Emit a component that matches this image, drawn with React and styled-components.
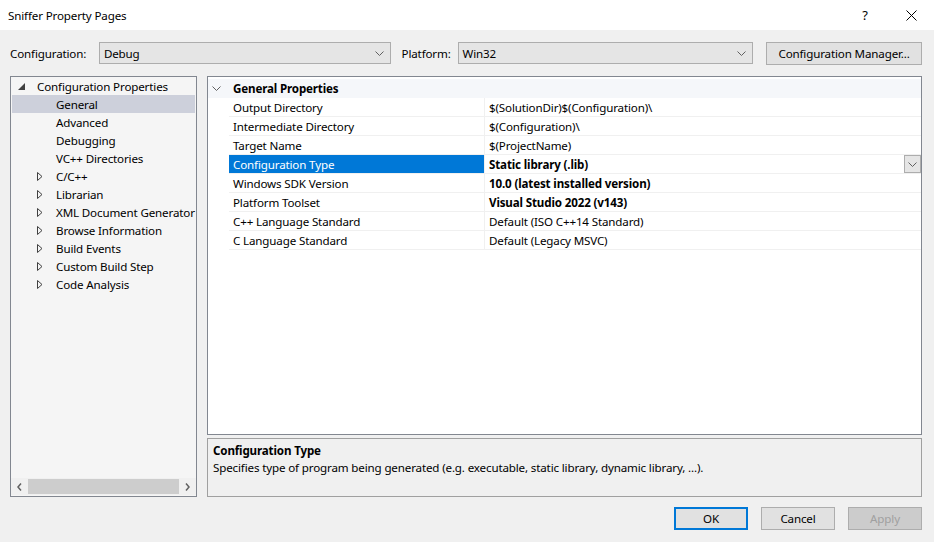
import React from 'react';
import styled, {createGlobalStyle} from 'styled-components';

const GlobalStyle = createGlobalStyle`
    body {
        margin: 0;
        font-family: "Noto Sans", "Open Sans", sans-serif;
        font-size: 11.6px;
        letter-spacing: -0.15px;
        color: #000;
    }
`;

const Window = styled.div`
    width: 934px;
    height: 542px;
    background: #f0f0f0;
    display: flex;
    flex-direction: column;
    overflow: hidden;
`;

const TitleBar = styled.div`
    height: 30px;
    background: #fff;
    display: flex;
    align-items: center;
    padding-left: 8px;
    flex-shrink: 0;
`;

const Title = styled.div`
    flex: 1;
`;

const TitleButton = styled.div`
    width: 46px;
    height: 30px;
    display: flex;
    align-items: center;
    justify-content: center;
    font-size: 13px;
`;

const Body = styled.div`
    flex: 1;
    display: flex;
    flex-direction: column;
    padding: 11px 12px 0 10px;
`;

const ConfigRow = styled.div`
    display: flex;
    align-items: center;
    height: 24px;
`;

const Label = styled.span`
    width: ${props => props.width}px;
`;

const Combo = styled.div`
    width: ${props => props.width}px;
    height: 22px;
    box-sizing: border-box;
    border: 1px solid #adadad;
    background: #e5e5e5;
    display: flex;
    align-items: center;
    padding: 0 6px 0 4px;
    margin-right: ${props => props.gap}px;
`;

const ComboText = styled.span`
    flex: 1;
`;

const Button = styled.div`
    width: ${props => props.width}px;
    height: 23px;
    box-sizing: border-box;
    border: ${props => props.primary ? '2px solid #0078d7' : '1px solid #adadad'};
    background: ${props => props.disabled ? '#cccccc' : '#e1e1e1'};
    color: ${props => props.disabled ? '#a0a0a0' : '#000'};
    display: flex;
    align-items: center;
    justify-content: center;
    white-space: nowrap;
`;

const Main = styled.div`
    display: flex;
    gap: 10px;
    margin-top: 11px;
    height: 421px;
`;

const Tree = styled.div`
    width: 187px;
    box-sizing: border-box;
    border: 1px solid #828790;
    background: #f5f5f5;
    display: flex;
    flex-direction: column;
    overflow: hidden;
`;

const TreeList = styled.div`
    flex: 1;
`;

const TreeRow = styled.div`
    height: 18px;
    display: flex;
    align-items: center;
    margin: 0 1px;
    padding-left: ${props => props.indent}px;
    background: ${props => props.selected ? '#cdd0db' : 'transparent'};
    white-space: nowrap;
`;

const Expander = styled.span`
    width: 19px;
    flex-shrink: 0;
    display: flex;
    align-items: center;
`;

const HScroll = styled.div`
    height: 17px;
    margin: 0 0 1px 0;
    display: flex;
    align-items: center;
    background: #f0f0f0;
`;

const ScrollArrow = styled.div`
    width: 17px;
    display: flex;
    justify-content: center;
    align-items: center;
`;

const ScrollThumb = styled.div`
    flex: 1;
    height: 15px;
    background: #cdcdcd;
`;

const RightColumn = styled.div`
    flex: 1;
    display: flex;
    flex-direction: column;
    gap: 3px;
`;

const Grid = styled.div`
    height: 360px;
    box-sizing: border-box;
    border: 1px solid #828790;
    background: #fff;
    padding-top: 2px;
`;

const GroupHeader = styled.div`
    height: 19px;
    display: flex;
    align-items: center;
    background: #f5f7fa;
    font-weight: bold;
`;

const GroupToggle = styled.span`
    width: 21px;
    padding-left: 4px;
    display: flex;
    align-items: center;
`;

const PropRow = styled.div`
    height: 19px;
    display: flex;
    margin-left: 21px;
    box-sizing: border-box;
    border-bottom: 1px solid #f0f0f0;
`;

const PropName = styled.div`
    width: 256px;
    box-sizing: border-box;
    padding-left: 4px;
    display: flex;
    align-items: center;
    border-right: 1px solid #f0f0f0;
    background: ${props => props.selected ? '#0078d7' : 'transparent'};
    color: ${props => props.selected ? '#fff' : '#000'};
`;

const PropValue = styled.div`
    flex: 1;
    display: flex;
    align-items: center;
    padding-left: 4px;
    font-weight: ${props => props.bold ? 'bold' : 'normal'};
`;

const ValueText = styled.span`
    flex: 1;
`;

const DropButton = styled.div`
    width: 17px;
    height: 18px;
    box-sizing: border-box;
    border: 1px solid #adadad;
    background: #e5e5e5;
    display: flex;
    align-items: center;
    justify-content: center;
`;

const Description = styled.div`
    height: 59px;
    box-sizing: border-box;
    border: 1px solid #a0a0a0;
    padding: 3px 5px;
    line-height: 17px;
`;

const DescTitle = styled.div`
    font-weight: bold;
`;

const Footer = styled.div`
    display: flex;
    justify-content: flex-end;
    gap: 13px;
    margin-top: 10px;
`;

const Chevron = () => (
    <svg width="9" height="5" viewBox="0 0 9 5">
        <path d="M0.5 0.5 L4.5 4.5 L8.5 0.5" fill="none" stroke="#606060" strokeWidth="1" />
    </svg>
);

const Collapsed = () => (
    <svg width="6" height="9" viewBox="0 0 6 9">
        <path d="M0.5 0.5 L5 4.5 L0.5 8.5 Z" fill="none" stroke="#404040" strokeWidth="1" />
    </svg>
);

const Expanded = () => (
    <svg width="7" height="7" viewBox="0 0 7 7">
        <path d="M7 0 L7 7 L0 7 Z" fill="#404040" />
    </svg>
);

const treeItems = [
    {label: 'General', selected: true},
    {label: 'Advanced'},
    {label: 'Debugging'},
    {label: 'VC++ Directories'},
    {label: 'C/C++', children: true},
    {label: 'Librarian', children: true},
    {label: 'XML Document Generator', children: true},
    {label: 'Browse Information', children: true},
    {label: 'Build Events', children: true},
    {label: 'Custom Build Step', children: true},
    {label: 'Code Analysis', children: true},
];

const properties = [
    {name: 'Output Directory', value: '$(SolutionDir)$(Configuration)\\'},
    {name: 'Intermediate Directory', value: '$(Configuration)\\'},
    {name: 'Target Name', value: '$(ProjectName)'},
    {name: 'Configuration Type', value: 'Static library (.lib)', bold: true, selected: true},
    {name: 'Windows SDK Version', value: '10.0 (latest installed version)', bold: true},
    {name: 'Platform Toolset', value: 'Visual Studio 2022 (v143)', bold: true},
    {name: 'C++ Language Standard', value: 'Default (ISO C++14 Standard)'},
    {name: 'C Language Standard', value: 'Default (Legacy MSVC)'},
];

const App = () => (
    <Window>
        <GlobalStyle />
        <TitleBar>
            <Title>Sniffer Property Pages</Title>
            <TitleButton>?</TitleButton>
            <TitleButton>
                <svg width="11" height="11" viewBox="0 0 11 11">
                    <path d="M0.5 0.5 L10.5 10.5 M10.5 0.5 L0.5 10.5" stroke="#000" strokeWidth="1" />
                </svg>
            </TitleButton>
        </TitleBar>
        <Body>
            <ConfigRow>
                <Label width={89}>Configuration:</Label>
                <Combo width={292} gap={11}>
                    <ComboText>Debug</ComboText>
                    <Chevron />
                </Combo>
                <Label width={56}>Platform:</Label>
                <Combo width={296} gap={13}>
                    <ComboText>Win32</ComboText>
                    <Chevron />
                </Combo>
                <Button width={156}>Configuration Manager...</Button>
            </ConfigRow>
            <Main>
                <Tree>
                    <TreeList>
                        <TreeRow indent={6}>
                            <Expander><Expanded /></Expander>
                            Configuration Properties
                        </TreeRow>
                        {treeItems.map(item => (
                            <TreeRow key={item.label} indent={25} selected={item.selected}>
                                <Expander>{item.children && <Collapsed />}</Expander>
                                {item.label}
                            </TreeRow>
                        ))}
                    </TreeList>
                    <HScroll>
                        <ScrollArrow>
                            <svg width="5" height="8" viewBox="0 0 5 8">
                                <path d="M4 0.5 L1 4 L4 7.5" fill="none" stroke="#606060" strokeWidth="1.5" />
                            </svg>
                        </ScrollArrow>
                        <ScrollThumb />
                        <ScrollArrow>
                            <svg width="5" height="8" viewBox="0 0 5 8">
                                <path d="M1 0.5 L4 4 L1 7.5" fill="none" stroke="#606060" strokeWidth="1.5" />
                            </svg>
                        </ScrollArrow>
                    </HScroll>
                </Tree>
                <RightColumn>
                    <Grid>
                        <GroupHeader>
                            <GroupToggle><Chevron /></GroupToggle>
                            <span>General Properties</span>
                        </GroupHeader>
                        {properties.map(prop => (
                            <PropRow key={prop.name}>
                                <PropName selected={prop.selected}>{prop.name}</PropName>
                                <PropValue bold={prop.bold}>
                                    <ValueText>{prop.value}</ValueText>
                                    {prop.selected && <DropButton><Chevron /></DropButton>}
                                </PropValue>
                            </PropRow>
                        ))}
                    </Grid>
                    <Description>
                        <DescTitle>Configuration Type</DescTitle>
                        <div>Specifies type of program being generated (e.g. executable, static library, dynamic library, ...).</div>
                    </Description>
                </RightColumn>
            </Main>
            <Footer>
                <Button width={74} primary>OK</Button>
                <Button width={74}>Cancel</Button>
                <Button width={74} disabled>Apply</Button>
            </Footer>
        </Body>
    </Window>
);

export default App;
